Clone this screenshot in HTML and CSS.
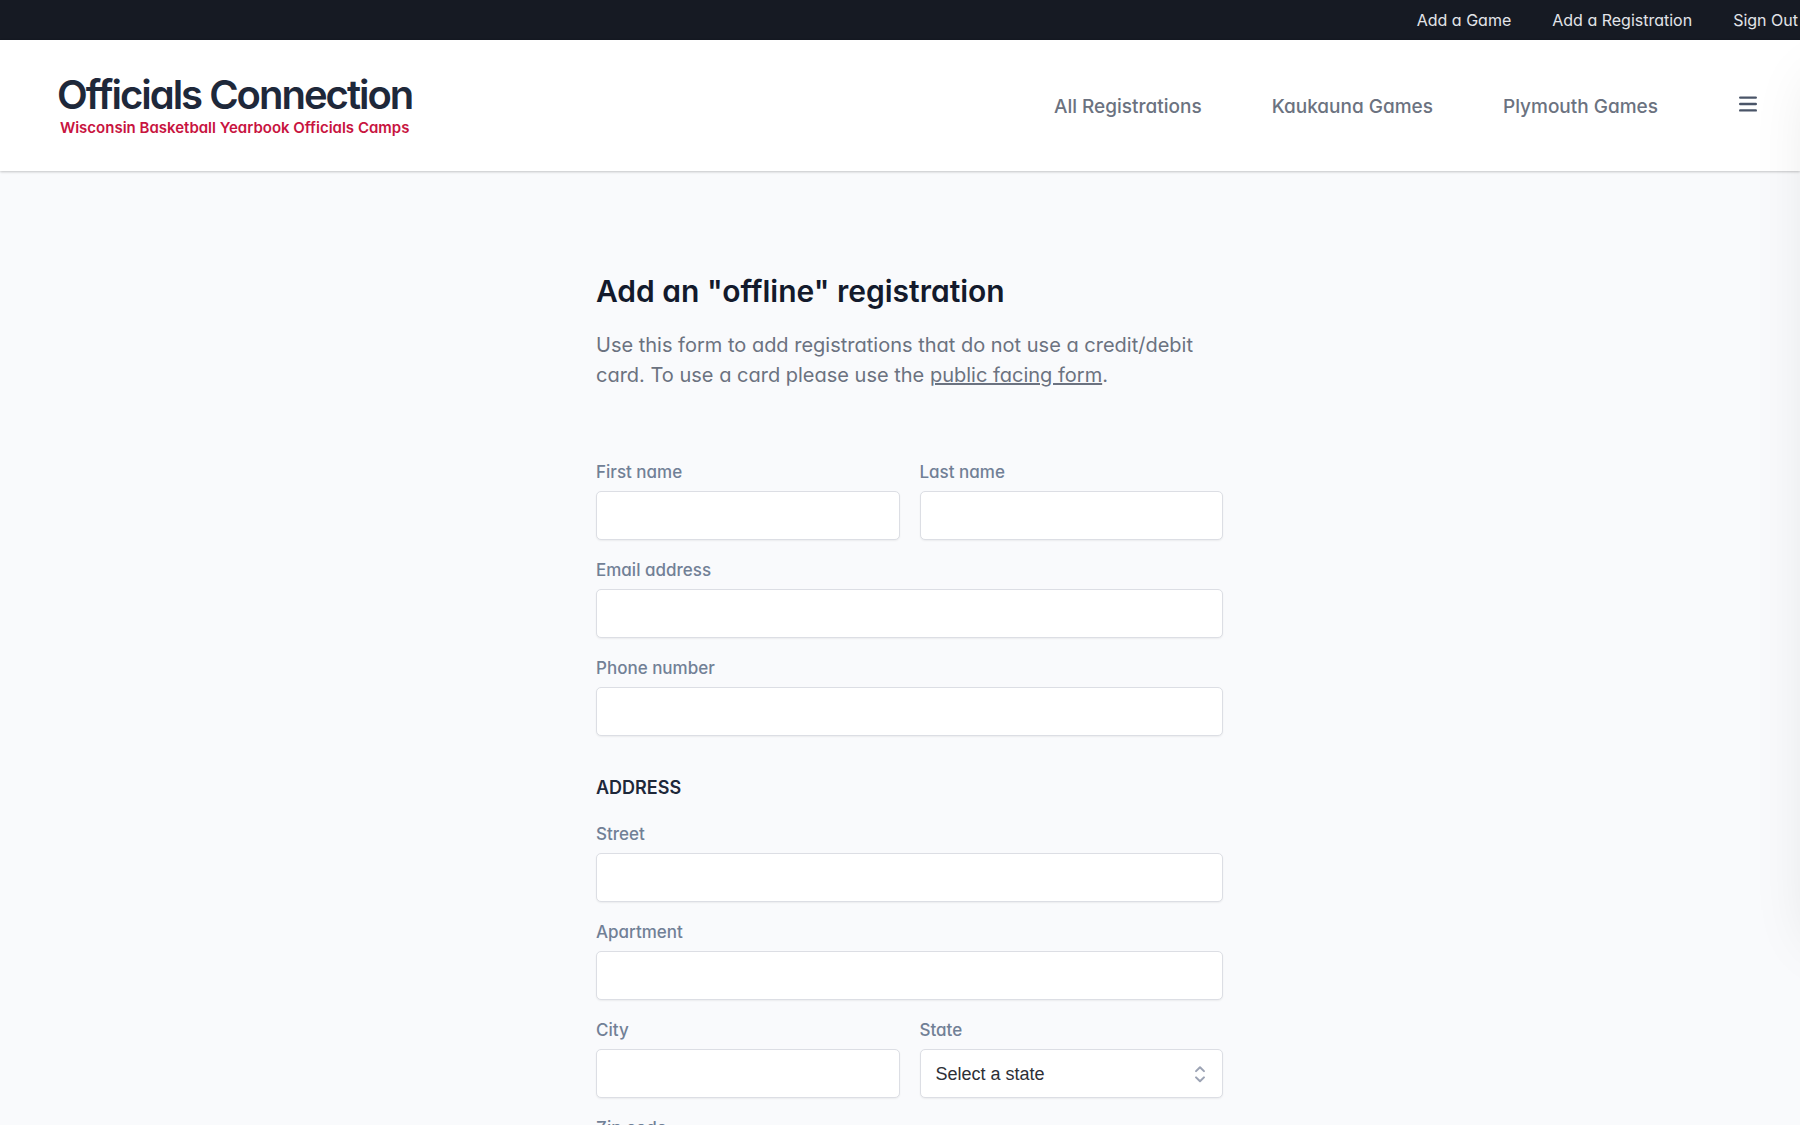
FILE: index.html
```html
<!DOCTYPE html>
<html lang="en">
<head>
<meta charset="utf-8">
<meta name="viewport" content="width=device-width, initial-scale=1">
<title>Officials Connection</title>
<link rel="stylesheet" href="styles.css">
</head>
<body>
<div class="page">
  <nav class="topbar" aria-label="Admin">
    <a href="#add-game">Add a Game</a>
    <a href="#add-registration">Add a Registration</a>
    <a href="#sign-out">Sign Out</a>
  </nav>

  <header class="header">
    <a class="brand" href="#home">
      <span class="brand-name">Officials Connection</span>
      <span class="brand-tagline">Wisconsin Basketball Yearbook Officials Camps</span>
    </a>
    <nav class="menu" aria-label="Main">
      <a href="#registrations">All Registrations</a>
      <a href="#kaukauna">Kaukauna Games</a>
      <a href="#plymouth">Plymouth Games</a>
      <button class="menu-button" type="button" aria-label="Open menu">
        <svg viewBox="0 0 24 24" width="24" height="24" fill="none" stroke="currentColor" stroke-width="2.4" stroke-linecap="round" aria-hidden="true"><path d="M4.2 5.6h15.6M4.2 12h15.6M4.2 18.4h15.6"/></svg>
      </button>
    </nav>
  </header>

  <main class="main">
    <div class="content">
      <h1 class="title">Add an "offline" registration</h1>
      <p class="intro">Use this form to add registrations that do not use a credit/debit card. To use a card please use the <a href="#public-form">public facing form</a>.</p>

      <form class="form">
        <div class="fields">
          <div class="field">
            <label for="first-name">First name</label>
            <input id="first-name" type="text">
          </div>
          <div class="field">
            <label for="last-name">Last name</label>
            <input id="last-name" type="text">
          </div>
          <div class="field field-wide">
            <label for="email">Email address</label>
            <input id="email" type="email">
          </div>
          <div class="field field-wide">
            <label for="phone">Phone number</label>
            <input id="phone" type="tel">
          </div>
        </div>

        <h2 class="section-title">Address</h2>
        <div class="fields">
          <div class="field field-wide">
            <label for="street">Street</label>
            <input id="street" type="text">
          </div>
          <div class="field field-wide">
            <label for="apartment">Apartment</label>
            <input id="apartment" type="text">
          </div>
          <div class="field">
            <label for="city">City</label>
            <input id="city" type="text">
          </div>
          <div class="field">
            <label for="state">State</label>
            <div class="select">
              <select id="state">
                <option>Select a state</option>
                <option>Illinois</option>
                <option>Michigan</option>
                <option>Minnesota</option>
                <option>Wisconsin</option>
              </select>
              <svg viewBox="0 0 20 20" width="24" height="24" fill="none" stroke="currentColor" stroke-width="1.7" stroke-linecap="round" stroke-linejoin="round" aria-hidden="true"><path d="M6.7 7.6L10 4.4l3.3 3.2M6.7 12.8L10 16l3.3-3.2"/></svg>
            </div>
          </div>
          <div class="field">
            <label for="zip">Zip code</label>
            <input id="zip" type="text">
          </div>
        </div>
      </form>
    </div>
  </main>

  <aside class="drawer" aria-hidden="true"></aside>
</div>
</body>
</html>
```
FILE: styles.css
```css
* {
  box-sizing: border-box;
}

body {
  margin: 0;
  background: #f9fafc;
  font-family: Inter, "Liberation Sans", sans-serif;
  font-feature-settings: "cv11" 1;
  color: #6b7280;
}

a {
  color: inherit;
  text-decoration: none;
}

.page {
  position: relative;
  overflow: hidden;
  min-height: 100vh;
}

.topbar {
  display: flex;
  justify-content: flex-end;
  align-items: center;
  gap: 41px;
  height: 40px;
  padding-right: 2px;
  background: #161a23;
  color: #e2e4e9;
  font-size: 16px;
  line-height: 24px;
}

.header {
  display: flex;
  justify-content: space-between;
  align-items: center;
  padding: 35px 32px 33px 57px;
  background: #fff;
  box-shadow: 0 1px 3px rgba(0, 0, 0, 0.1), 0 1px 2px rgba(0, 0, 0, 0.12);
}

.brand {
  display: flex;
  flex-direction: column;
  align-items: center;
  gap: 3px;
}

.brand-name {
  color: #1e283a;
  font-size: 40px;
  font-weight: 600;
  line-height: 40px;
  letter-spacing: -0.05em;
}

.brand-tagline {
  color: #c8143f;
  font-size: 15px;
  font-weight: 600;
  line-height: 20px;
}

.menu {
  display: flex;
  align-items: center;
  gap: 70px;
  font-size: 19px;
  font-weight: 500;
  line-height: 28px;
}

.menu-button {
  display: flex;
  padding: 8px 8px 14px;
  border: 0;
  background: none;
  color: #4a5568;
}

.main {
  padding: 102px 0 96px 19px;
}

.content {
  max-width: 627px;
  margin: 0 auto;
}

.title {
  margin: 0 0 21px;
  color: #131a2c;
  font-size: 30px;
  font-weight: 600;
  line-height: 36px;
}

.intro {
  margin: 0 0 70px;
  font-size: 20px;
  line-height: 30px;
}

.intro a {
  text-decoration: underline;
}

.fields {
  display: grid;
  grid-template-columns: 1fr 1fr;
  gap: 18px 20px;
}

.field {
  display: flex;
  flex-direction: column;
  gap: 7px;
}

.field-wide {
  grid-column: 1 / -1;
}

.field label {
  color: #718096;
  font-size: 17px;
  font-weight: 500;
  line-height: 24px;
}

.field input,
.field select {
  width: 100%;
  height: 49px;
  padding: 0 15px;
  border: 1px solid #dcdee4;
  border-radius: 5px;
  background: #fff;
  box-shadow: 0 1px 2px rgba(0, 0, 0, 0.06);
  color: #2d2f36;
  font-family: "Liberation Sans", sans-serif;
  font-size: 18px;
}

.field select {
  appearance: none;
}

.section-title {
  margin: 40px 0 22px;
  color: #1e283a;
  font-size: 18px;
  font-weight: 600;
  line-height: 24px;
  text-transform: uppercase;
}

.select {
  display: grid;
  align-items: center;
}

.select > * {
  grid-area: 1 / 1;
}

.select svg {
  justify-self: end;
  margin-right: 11px;
  color: #9ca3b4;
  pointer-events: none;
}

/* Off-canvas menu, closed: only its shadow reaches the page. */
.drawer {
  position: absolute;
  top: 40px;
  left: 100%;
  width: 320px;
  height: calc(100vh - 240px);
  box-shadow: 0 28px 57px -13px rgba(0, 0, 0, 0.1);
}
```
